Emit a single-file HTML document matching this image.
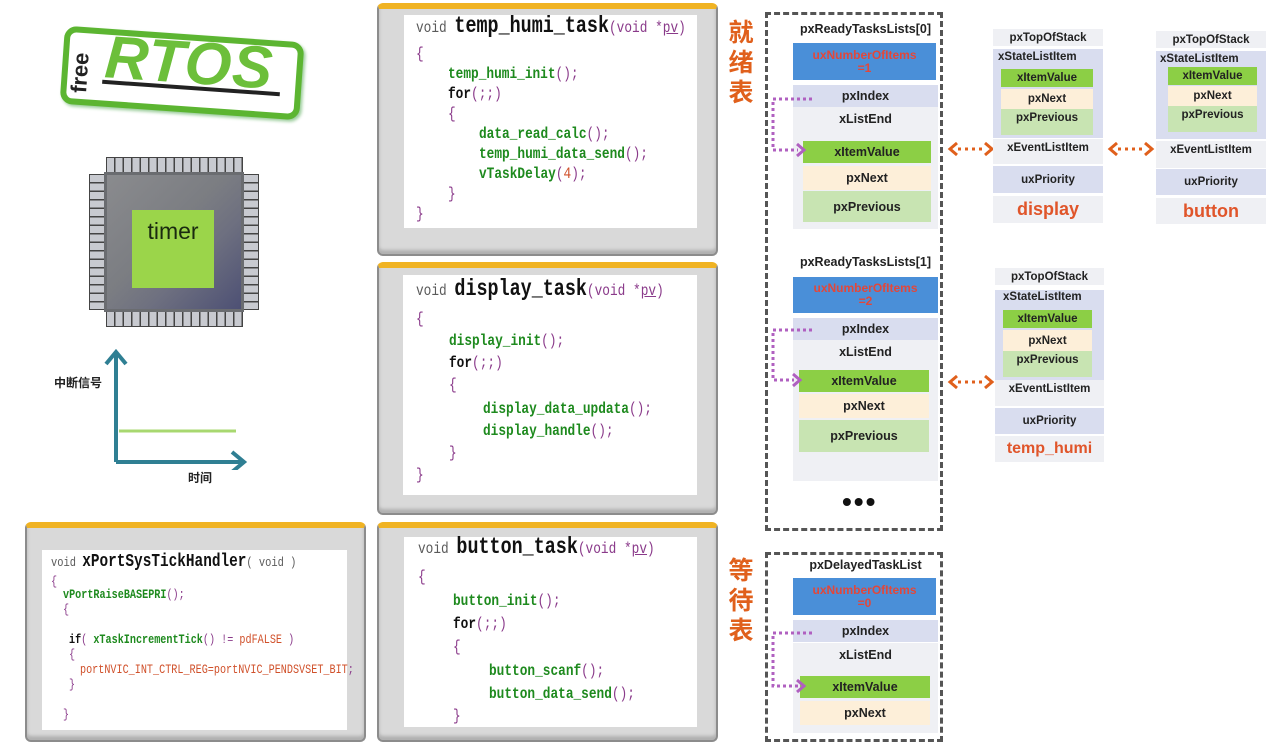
<!DOCTYPE html>
<html><head><meta charset="utf-8"><style>
*{margin:0;padding:0;box-sizing:border-box}
body{width:1280px;height:724px;background:#fff;position:relative;overflow:hidden;font-family:"Liberation Sans","Noto Sans CJK SC",sans-serif}
.a{position:absolute}
.panel{position:absolute;background:#d9d9d9;border:2px solid #8c8c8c;border-radius:6px;border-top:6px solid #f0b323;box-shadow:inset 0 -4px 3px #b0b0b0}
.inner{position:absolute;background:#fff}
.c{position:absolute;font-family:"Liberation Mono",monospace;font-size:16px;white-space:nowrap;transform:scaleX(.8);transform-origin:left top;font-weight:bold;color:#1e8a1e;line-height:18px}
.p{color:#8a3a8a;font-weight:normal}
.v{color:#5a5a5a;font-weight:normal}
.t{color:#111;font-size:23px;font-weight:bold}
.o{color:#d0502a;font-weight:normal}
.b{position:absolute;text-align:center;font-weight:bold;font-size:12.5px;color:#222;display:flex;align-items:center;justify-content:center}
.ti{position:absolute;font-weight:bold;font-size:12.5px;color:#222;text-align:center}
.blue{background:#4a8fd8;color:#e2473a;line-height:13px;font-size:12px}
.idx{background:#d9ddef}
.le{background:#eff0f4}
.g{background:#8ccf45}
.cr{background:#fdefd9}
.lg{background:#c8e4b2}
.dash{position:absolute;border:3px dashed #555;}
.cn{position:absolute;color:#e0601c;font-size:25px;font-weight:bold;line-height:30px;width:30px;text-align:center}
.tag{color:#e0552a;font-size:18px}
.s{font-size:13px;transform:scaleX(.78)}
</style></head><body>

<div class="a" style="left:62px;top:34px;width:240px;height:78px;border:6px solid #5cb531;border-radius:12px;transform:rotate(4deg);background:#fff;box-shadow:2px 2px 3px #9c9"></div>
<div class="a" style="left:105px;top:28px;font-size:60px;font-weight:bold;font-style:italic;color:#6cbf3a;transform:rotate(4deg);letter-spacing:1px">RTOS</div>
<div class="a" style="left:66px;font-size:22px;font-weight:bold;color:#222;transform:rotate(-86deg);transform-origin:left top;top:92px">free</div>
<div class="a" style="left:102px;top:86px;width:178px;height:4px;background:#222;transform:rotate(4deg)"></div>

<div class="a" style="left:106px;top:157px;width:137px;height:16px;background:repeating-linear-gradient(90deg,#c8cad0 0 7px,#444 7px 8.5px);border:1px solid #444"></div>
<div class="a" style="left:106px;top:311px;width:137px;height:16px;background:repeating-linear-gradient(90deg,#c8cad0 0 7px,#444 7px 8.5px);border:1px solid #444"></div>
<div class="a" style="left:89px;top:174px;width:16px;height:136px;background:repeating-linear-gradient(180deg,#c8cad0 0 7px,#444 7px 8.5px);border:1px solid #444"></div>
<div class="a" style="left:243px;top:174px;width:16px;height:136px;background:repeating-linear-gradient(180deg,#c8cad0 0 7px,#444 7px 8.5px);border:1px solid #444"></div>
<div class="a" style="left:104px;top:172px;width:140px;height:140px;background:linear-gradient(135deg,#8a8b8e 0%,#7b7d82 45%,#6e7080 65%,#4d5074 100%);border:3px solid #6a6c70"></div>
<div class="a" style="left:132px;top:210px;width:82px;height:78px;background:#9bd54a;font-size:23px;color:#1a2a10;text-align:center;padding-top:8px">timer</div>

<svg class="a" style="left:0;top:340px" width="260" height="130">
<path d="M116 122V14M106 24L116 12L126 24M116 122H242M232 112L244 122L232 132" stroke="#2f7f93" stroke-width="4" fill="none"/>
<path d="M119 91H236" stroke="#a8d870" stroke-width="3"/>
</svg>
<div class="a" style="left:54px;top:374px;font-size:12px;font-weight:bold;color:#222">中断信号</div>
<div class="a" style="left:188px;top:469px;font-size:12px;font-weight:bold;color:#222">时间</div>

<div class="panel" style="left:377px;top:3px;width:341px;height:253px"></div>
<div class="inner" style="left:404px;top:15px;width:293px;height:213px"></div>
<div class="c" style="left:416px;top:17px"><span class="v">void </span><span class="t">temp_humi_task</span><span class="p">(void *<u>pv</u>)</span></div>
<div class="c" style="left:416px;top:45px"><span class="p">{</span></div>
<div class="c" style="left:448px;top:65px">temp_humi_init<span class="p">();</span></div>
<div class="c" style="left:448px;top:85px;color:#111">for<span class="p">(;;)</span></div>
<div class="c" style="left:448px;top:105px"><span class="p">{</span></div>
<div class="c" style="left:479px;top:125px">data_read_calc<span class="p">();</span></div>
<div class="c" style="left:479px;top:145px">temp_humi_data_send<span class="p">();</span></div>
<div class="c" style="left:479px;top:165px">vTaskDelay<span class="p">(</span><span class="o">4</span><span class="p">);</span></div>
<div class="c" style="left:448px;top:185px"><span class="p">}</span></div>
<div class="c" style="left:416px;top:205px"><span class="p">}</span></div>

<div class="panel" style="left:377px;top:262px;width:341px;height:253px"></div>
<div class="inner" style="left:403px;top:275px;width:294px;height:220px"></div>
<div class="c" style="left:416px;top:280px"><span class="v">void </span><span class="t">display_task</span><span class="p">(void *<u>pv</u>)</span></div>
<div class="c" style="left:416px;top:310px"><span class="p">{</span></div>
<div class="c" style="left:449px;top:332px">display_init<span class="p">();</span></div>
<div class="c" style="left:449px;top:354px;color:#111">for<span class="p">(;;)</span></div>
<div class="c" style="left:449px;top:376px"><span class="p">{</span></div>
<div class="c" style="left:483px;top:400px">display_data_updata<span class="p">();</span></div>
<div class="c" style="left:483px;top:422px">display_handle<span class="p">();</span></div>
<div class="c" style="left:449px;top:444px"><span class="p">}</span></div>
<div class="c" style="left:416px;top:466px"><span class="p">}</span></div>

<div class="panel" style="left:377px;top:522px;width:341px;height:220px"></div>
<div class="inner" style="left:404px;top:537px;width:293px;height:190px"></div>
<div class="c" style="left:418px;top:538px"><span class="v">void </span><span class="t">button_task</span><span class="p">(void *<u>pv</u>)</span></div>
<div class="c" style="left:418px;top:568px"><span class="p">{</span></div>
<div class="c" style="left:453px;top:592px">button_init<span class="p">();</span></div>
<div class="c" style="left:453px;top:615px;color:#111">for<span class="p">(;;)</span></div>
<div class="c" style="left:453px;top:638px"><span class="p">{</span></div>
<div class="c" style="left:489px;top:662px">button_scanf<span class="p">();</span></div>
<div class="c" style="left:489px;top:685px">button_data_send<span class="p">();</span></div>
<div class="c" style="left:453px;top:707px"><span class="p">}</span></div>

<div class="panel" style="left:25px;top:522px;width:341px;height:220px"></div>
<div class="inner" style="left:42px;top:550px;width:305px;height:180px"></div>
<div class="c" style="left:51px;top:553px;font-size:13px;transform:scaleX(.8)"><span class="v">void </span><span class="t" style="font-size:18px">xPortSysTickHandler</span><span class="v">( void )</span></div>
<div class="c s" style="left:51px;top:573px"><span class="p">{</span></div>
<div class="c s" style="left:63px;top:586px">vPortRaiseBASEPRI<span class="p">();</span></div>
<div class="c s" style="left:63px;top:601px"><span class="p">{</span></div>
<div class="c s" style="left:69px;top:631px"><span style="color:#111">if</span><span class="p">( </span>xTaskIncrementTick<span class="p">() != </span><span class="o">pdFALSE</span><span class="p"> )</span></div>
<div class="c s" style="left:69px;top:646px"><span class="p">{</span></div>
<div class="c s" style="left:80px;top:661px"><span class="o">portNVIC_INT_CTRL_REG=portNVIC_PENDSVSET_BIT</span><span class="p">;</span></div>
<div class="c s" style="left:69px;top:676px"><span class="p">}</span></div>
<div class="c s" style="left:63px;top:706px"><span class="p">}</span></div>

<div class="cn" style="left:726px;top:18px">就<br>绪<br>表</div>
<div class="cn" style="left:726px;top:556px">等<br>待<br>表</div>

<div class="dash" style="left:765px;top:12px;width:178px;height:519px"></div>
<div class="dash" style="left:765px;top:552px;width:178px;height:190px"></div>

<div class="ti" style="left:793px;top:22px;width:145px">pxReadyTasksLists[0]</div>
<div class="b blue" style="left:793px;top:43px;width:143px;height:37px">uxNumberOfItems<br>=1</div>
<div class="b idx" style="left:793px;top:85px;width:145px;height:22px">pxIndex</div>
<div class="b le" style="left:793px;top:107px;width:145px;height:122px;align-items:flex-start;padding-top:5px">xListEnd</div>
<div class="b g" style="left:803px;top:141px;width:128px;height:22px">xItemValue</div>
<div class="b cr" style="left:803px;top:166px;width:128px;height:24px">pxNext</div>
<div class="b lg" style="left:803px;top:191px;width:128px;height:31px">pxPrevious</div>

<div class="ti" style="left:793px;top:255px;width:145px">pxReadyTasksLists[1]</div>
<div class="b blue" style="left:793px;top:277px;width:145px;height:36px">uxNumberOfItems<br>=2</div>
<div class="b idx" style="left:793px;top:318px;width:145px;height:22px">pxIndex</div>
<div class="b le" style="left:793px;top:340px;width:145px;height:141px;align-items:flex-start;padding-top:5px">xListEnd</div>
<div class="b g" style="left:799px;top:370px;width:130px;height:22px">xItemValue</div>
<div class="b cr" style="left:799px;top:394px;width:130px;height:24px">pxNext</div>
<div class="b lg" style="left:799px;top:420px;width:130px;height:32px">pxPrevious</div>
<div class="a" style="left:842px;top:486px;font-size:28px;letter-spacing:2px;color:#111;font-weight:bold">•••</div>

<div class="ti" style="left:793px;top:558px;width:145px">pxDelayedTaskList</div>
<div class="b blue" style="left:793px;top:578px;width:143px;height:37px">uxNumberOfItems<br>=0</div>
<div class="b idx" style="left:793px;top:620px;width:145px;height:22px">pxIndex</div>
<div class="b le" style="left:793px;top:643px;width:145px;height:90px;align-items:flex-start;padding-top:5px">xListEnd</div>
<div class="b g" style="left:800px;top:676px;width:130px;height:22px">xItemValue</div>
<div class="b cr" style="left:800px;top:701px;width:130px;height:24px">pxNext</div>

<svg class="a" style="left:760px;top:0" width="60" height="724">
<g stroke="#b060c0" stroke-width="3" stroke-dasharray="3 3" fill="none">
<path d="M52 99H13V150H38"/><path d="M52 330H13V380H34"/><path d="M52 633H13V686H38"/>
</g>
<g stroke="#b060c0" stroke-width="3" fill="none">
<path d="M37 144L44 150L37 156"/><path d="M33 374L40 380L33 386"/><path d="M37 680L44 686L37 692"/>
</g>
</svg>

<svg class="a" style="left:940px;top:0" width="220" height="400">
<g stroke="#e0601c" stroke-width="3" fill="none">
<path d="M17 143L10 149L17 155M45 143L52 149L45 155"/>
<path d="M17 376L10 382L17 388M45 376L52 382L45 388"/>
<path d="M177 143L170 149L177 155M205 143L212 149L205 155"/>
</g>
<g stroke="#e0601c" stroke-width="3" stroke-dasharray="3 4">
<path d="M18 149H45M18 382H45M178 149H205"/>
</g>
</svg>

<div class="b le" style="left:993px;top:29px;width:110px;height:17px;font-size:11.5px">pxTopOfStack</div>
<div class="a idx" style="left:993px;top:49px;width:110px;height:89px"></div>
<div class="ti" style="left:998px;top:51px;font-size:11.5px">xStateListItem</div>
<div class="b g" style="left:1001px;top:69px;width:92px;height:18px;font-size:11.5px">xItemValue</div>
<div class="b cr" style="left:1001px;top:89px;width:92px;height:20px;font-size:11.5px">pxNext</div>
<div class="b lg" style="left:1001px;top:109px;width:92px;height:26px;font-size:11.5px;align-items:flex-start;padding-top:3px">pxPrevious</div>
<div class="b le" style="left:993px;top:139px;width:110px;height:25px;font-size:11.5px;align-items:flex-start;padding-top:3px">xEventListItem</div>
<div class="b idx" style="left:993px;top:166px;width:110px;height:27px;font-size:11.5px">uxPriority</div>
<div class="b le tag" style="left:993px;top:196px;width:110px;height:27px">display</div>

<div class="b le" style="left:1156px;top:31px;width:110px;height:17px;font-size:11.5px">pxTopOfStack</div>
<div class="a idx" style="left:1156px;top:51px;width:110px;height:88px"></div>
<div class="ti" style="left:1160px;top:53px;font-size:11.5px">xStateListItem</div>
<div class="b g" style="left:1168px;top:67px;width:89px;height:18px;font-size:11.5px">xItemValue</div>
<div class="b cr" style="left:1168px;top:86px;width:89px;height:20px;font-size:11.5px">pxNext</div>
<div class="b lg" style="left:1168px;top:106px;width:89px;height:26px;font-size:11.5px;align-items:flex-start;padding-top:3px">pxPrevious</div>
<div class="b le" style="left:1156px;top:141px;width:110px;height:27px;font-size:11.5px;align-items:flex-start;padding-top:3px">xEventListItem</div>
<div class="b idx" style="left:1156px;top:169px;width:110px;height:26px;font-size:11.5px">uxPriority</div>
<div class="b le tag" style="left:1156px;top:198px;width:110px;height:26px">button</div>

<div class="b le" style="left:995px;top:268px;width:109px;height:17px;font-size:11.5px">pxTopOfStack</div>
<div class="a idx" style="left:995px;top:290px;width:109px;height:90px"></div>
<div class="ti" style="left:1003px;top:291px;font-size:11.5px">xStateListItem</div>
<div class="b g" style="left:1003px;top:310px;width:89px;height:18px;font-size:11.5px">xItemValue</div>
<div class="b cr" style="left:1003px;top:330px;width:89px;height:21px;font-size:11.5px">pxNext</div>
<div class="b lg" style="left:1003px;top:351px;width:89px;height:26px;font-size:11.5px;align-items:flex-start;padding-top:3px">pxPrevious</div>
<div class="b le" style="left:995px;top:380px;width:109px;height:26px;font-size:11.5px;align-items:flex-start;padding-top:3px">xEventListItem</div>
<div class="b idx" style="left:995px;top:408px;width:109px;height:26px;font-size:11.5px">uxPriority</div>
<div class="b le tag" style="left:995px;top:436px;width:109px;height:26px;font-size:16px">temp_humi</div>

</body></html>
